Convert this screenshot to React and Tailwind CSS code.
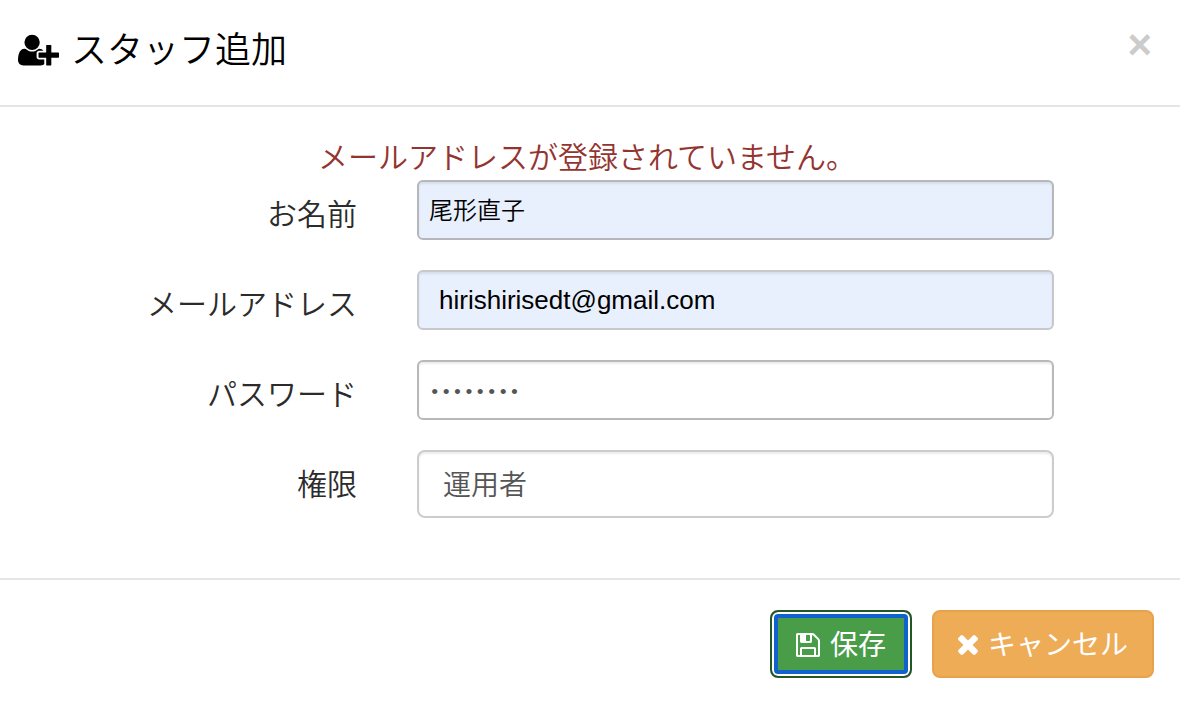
import React, { useState } from 'react';

const UserPlusIcon = () => (
    <svg viewBox="0 0 2048 1792" className="mt-1.5 h-9 w-[41px] shrink-0" fill="currentColor" aria-hidden="true">
        <path d="M704 896q-159 0-271.500-112.500t-112.500-271.500 112.500-271.500 271.500-112.500 271.500 112.500 112.500 271.500-112.500 271.500-271.500 112.500zm960 128h352q13 0 22.500 9.500t9.500 22.500v192q0 13-9.500 22.500t-22.500 9.500h-352v352q0 13-9.500 22.500t-22.500 9.500h-192q-13 0-22.500-9.500t-9.500-22.500v-352h-352q-13 0-22.500-9.500t-9.500-22.500v-192q0-13 9.500-22.500t22.500-9.500h352v-352q0-13 9.500-22.500t22.500-9.500h192q13 0 22.500 9.500t9.500 22.500v352zm-736 224q0 52 38 90t90 38h256v238q-68 50-171 50h-874q-121 0-194-69t-73-190q0-53 3.500-103.500t14-109 26.500-108.500 43-97.500 62-81 85.500-53.500 111.500-20q19 0 39 17 79 61 154.500 91.500t164.500 30.500 164.500-30.500 154.500-91.500q20-17 39-17 132 0 217 96h-223q-52 0-90 38t-38 90v192z" />
    </svg>
);

const FloppyIcon = () => (
    <svg viewBox="128 128 1536 1536" className="mt-1 size-6 shrink-0" fill="currentColor" aria-hidden="true">
        <path d="M512 1536h768v-384h-768v384zm896 0h128v-896q0-14-10-38.500t-20-34.500l-281-281q-10-10-34-20t-39-10v416q0 40-28 68t-68 28h-576q-40 0-68-28t-28-68v-416h-128v1280h128v-416q0-40 28-68t68-28h832q40 0 68 28t28 68v416zm-384-928v-320q0-13-9.500-22.500t-22.500-9.500h-192q-13 0-22.500 9.500t-9.500 22.500v320q0 13 9.500 22.500t22.500 9.500h192q13 0 22.500-9.500t9.500-22.500zm640 32v928q0 40-28 68t-68 28h-1344q-40 0-68-28t-28-68v-1344q0-40 28-68t68-28h928q40 0 88 20t76 48l280 280q28 28 48 76t20 88z" />
    </svg>
);

const TimesIcon = () => (
    <svg viewBox="302 366 1188 1188" className="mt-1 size-5 shrink-0" fill="currentColor" aria-hidden="true">
        <path d="M1490 1322q0 40-28 68l-136 136q-28 28-68 28t-68-28l-294-294-294 294q-28 28-68 28t-68-28l-136-136q-28-28-28-68t28-68l294-294-294-294q-28-28-28-68t28-68l136-136q28-28 68-28t68 28l294 294 294-294q28-28 68-28t68 28l136 136q28 28 28 68t-28 68l-294 294 294 294q28 28 28 68z" />
    </svg>
);

const FormRow = ({ id, label, children }) => (
    <div className="flex items-start gap-[60px]">
        <label htmlFor={id} className="w-[357px] shrink-0 pt-3 text-right text-[30px] leading-10 text-[#2b2b2b]">
            {label}
        </label>
        <div className="flex min-w-0 flex-1">{children}</div>
    </div>
);

export default function App() {
    const [name, setName] = useState('尾形直子');
    const [email, setEmail] = useState('hirishirisedt@gmail.com');
    const [password, setPassword] = useState('password');
    const [role, setRole] = useState('operator');

    return (
        <div className="min-h-screen bg-white font-['Noto_Sans_CJK_JP',sans-serif] font-[350]">
            {/* Header */}
            <header className="flex items-start justify-between border-b-2 border-[#e5e5e5] pt-[22px] pr-7 pb-[33px] pl-[18px]">
                <h1 className="flex items-center gap-3 text-4xl leading-[50px] font-[350] text-black">
                    <UserPlusIcon />
                    スタッフ追加
                </h1>
                <button type="button" aria-label="閉じる" className="pt-0.5 font-['Liberation_Sans',sans-serif] text-[42px] leading-[42px] font-bold text-[#cccccc]">
                    ×
                </button>
            </header>

            <form onSubmit={(e) => e.preventDefault()}>
                {/* Body */}
                <div className="pt-7 pb-[60px]">
                    <p role="alert" className="pr-1.5 pb-1 text-center text-[30px] leading-[41px] text-[#943430]">
                        メールアドレスが登録されていません。
                    </p>
                    <div className="flex flex-col gap-[30px] pr-[126px]">
                        <FormRow id="name" label="お名前">
                            <input
                                id="name"
                                type="text"
                                value={name}
                                onChange={(e) => setName(e.target.value)}
                                className="h-[60px] w-full rounded-md border-2 border-[#b5b7bb] bg-[#e8f0fe] px-2.5 pb-1 text-2xl text-black shadow-[inset_0_2px_2px_rgba(0,0,0,0.075)] outline-none"
                            />
                        </FormRow>
                        <FormRow id="email" label="メールアドレス">
                            <input
                                id="email"
                                type="email"
                                value={email}
                                onChange={(e) => setEmail(e.target.value)}
                                className="h-[60px] w-full rounded-md border-2 border-[#c6c8cc] bg-[#e8f0fe] px-5 font-['Liberation_Sans',sans-serif] text-[26px] text-black shadow-[inset_0_2px_2px_rgba(0,0,0,0.075)] outline-none"
                            />
                        </FormRow>
                        <FormRow id="password" label="パスワード">
                            <input
                                id="password"
                                type="password"
                                value={password}
                                onChange={(e) => setPassword(e.target.value)}
                                className="h-[60px] w-full rounded-md border-2 border-[#b8b8b8] bg-white px-2.5 pt-1.5 font-['Liberation_Mono',monospace] text-[19px] text-[#555555] shadow-[inset_0_2px_2px_rgba(0,0,0,0.075)] outline-none"
                            />
                        </FormRow>
                        <FormRow id="role" label="権限">
                            <select
                                id="role"
                                value={role}
                                onChange={(e) => setRole(e.target.value)}
                                className="h-[68px] w-full appearance-none rounded-lg border-2 border-[#cccccc] bg-white px-6 pb-0.5 text-[28px] text-[#555555] shadow-[inset_0_2px_2px_rgba(0,0,0,0.075)] outline-none"
                            >
                                <option value="operator">運用者</option>
                            </select>
                        </FormRow>
                    </div>
                </div>

                {/* Footer */}
                <footer className="flex justify-end gap-5 border-t-2 border-[#e5e5e5] pt-[30px] pr-[26px] pb-6">
                    <button
                        type="submit"
                        className="flex h-[68px] items-center gap-2.5 rounded-lg border-2 border-[#255625] bg-[#499d49] px-6 pb-0.5 text-[28px] font-normal text-white shadow-[inset_0_0_0_2px_#ffffff,inset_0_0_0_6px_#1062cc]"
                    >
                        <FloppyIcon />
                        保存
                    </button>
                    <button
                        type="button"
                        className="flex h-[68px] items-center gap-2.5 rounded-lg border-2 border-[#e8a34a] bg-[#eeac57] px-6 pb-0.5 text-[28px] font-normal text-white"
                    >
                        <TimesIcon />
                        キャンセル
                    </button>
                </footer>
            </form>
        </div>
    );
}
